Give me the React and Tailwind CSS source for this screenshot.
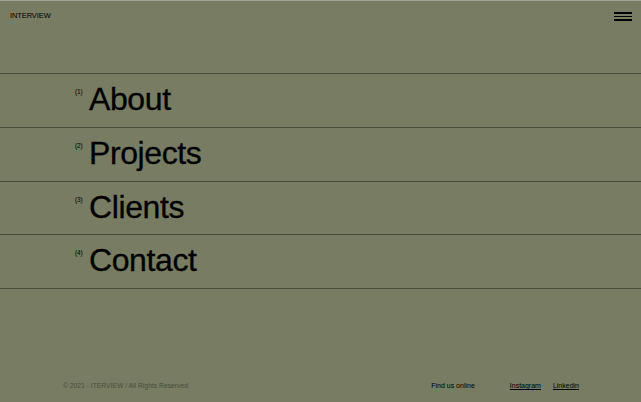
import React from "react";

const items = [
  { n: "(1)", label: "About" },
  { n: "(2)", label: "Projects" },
  { n: "(3)", label: "Clients" },
  { n: "(4)", label: "Contact" },
];

export default function App() {
  return (
    <div
      className="w-[641px] h-[402px] bg-[#777c62] text-black flex flex-col overflow-hidden border-t border-[#a3a596]"
      style={{ fontFamily: '"Liberation Sans", Arial, sans-serif' }}
    >
      <header className="h-[72px] flex items-start justify-between px-[10px] pt-[10px]">
        <span className="text-[7.5px] leading-[10px] tracking-[-0.1px]">INTERVIEW</span>
        <button className="mt-[1px] mr-[-1px] flex flex-col gap-[2px] w-[18px]">
          <span className="block h-[1.5px] bg-black" />
          <span className="block h-[1.5px] bg-black" />
          <span className="block h-[1.5px] bg-black" />
        </button>
      </header>
      <nav className="border-t border-[#4a4d3c]">
        {items.map((it) => (
          <div
            key={it.label}
            className="h-[53.75px] border-b border-[#4a4d3c] flex items-start pl-[75px] pt-[9px]"
          >
            <span className="text-[6.5px] leading-none mt-[6px] w-[14px] tracking-[-0.2px]">{it.n}</span>
            <span className="text-[32px] leading-[32px] tracking-[-0.4px] [-webkit-text-stroke:0.3px_black]">{it.label}</span>
          </div>
        ))}
      </nav>
      <div className="flex-1" />
      <footer className="h-[21px] flex items-start text-[7px] leading-[10px]">
        <span className="ml-[63px] text-[6.75px] text-[#4a4d3e]">© 2021 - ITERVIEW / All Rights Reserved</span>
        <span className="ml-auto">Find us online</span>
        <a className="ml-[35px] underline">Instagram</a>
        <a className="ml-[12px] mr-[62px] underline">Linkedin</a>
      </footer>
    </div>
  );
}
